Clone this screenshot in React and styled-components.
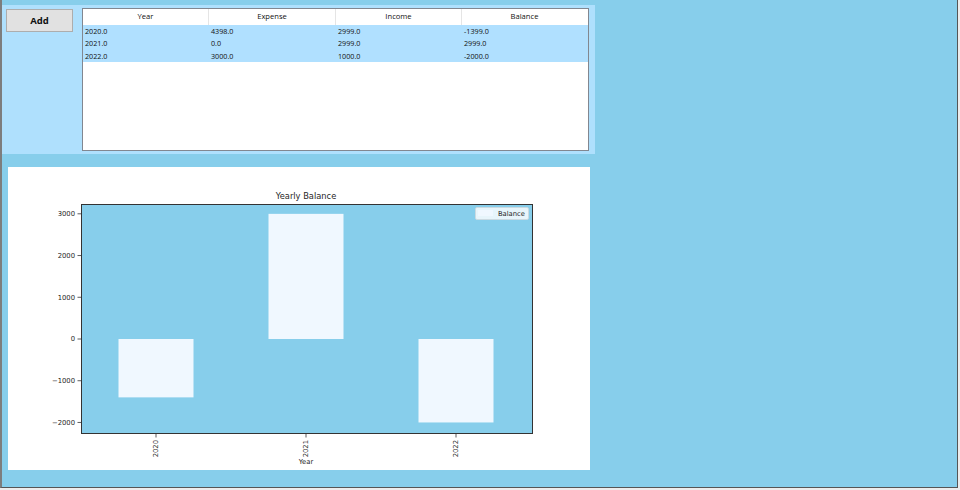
import React from "react";
import styled, { createGlobalStyle } from "styled-components";

const Global = createGlobalStyle`
  html, body { margin: 0; padding: 0; background: #ececec; }
  body { font-family: "Noto Sans", "DejaVu Sans", sans-serif; }
`;

const Window = styled.div`
  box-sizing: border-box;
  width: 958px;
  height: 488px;
  background: #87ceeb;
  border-left: 2px solid #7d7d7d;
  border-right: 1px solid #555;
  border-bottom: 1px solid #555;
  padding-top: 5px;
  display: flex;
  flex-direction: column;
  align-items: flex-start;
`;

const TopPanel = styled.div`
  box-sizing: border-box;
  width: 593px;
  height: 149px;
  background: #afe0fd;
  display: flex;
  align-items: flex-start;
  padding: 3px 0 0 4px;
`;

const Button = styled.button`
  box-sizing: border-box;
  width: 67px;
  height: 23px;
  margin-top: 1px;
  background: #e1e1e1;
  border: 1px solid #adadad;
  font-family: "Open Sans", "Noto Sans", sans-serif;
  font-weight: 700;
  font-size: 9.5px;
  color: #111;
  padding: 0;
  cursor: default;
`;

const Table = styled.div`
  box-sizing: border-box;
  width: 507px;
  height: 143px;
  margin-left: 9px;
  border: 1px solid #828790;
  background: #fff;
  font-family: "Open Sans", "Noto Sans", sans-serif;
  font-size: 7.2px;
  color: #111;
`;

const Grid = styled.div`
  display: grid;
  grid-template-columns: 126px 127px 126px 126px;
`;

const HeadCell = styled.div`
  box-sizing: border-box;
  height: 16px;
  line-height: 15px;
  font-size: 7.6px;
  text-align: center;
  border-right: 1px solid ${(p) => (p.$last ? "transparent" : "#e5e5e5")};
  background: #fff;
`;

const Cell = styled.div`
  box-sizing: border-box;
  height: 12.33px;
  line-height: 12px;
  padding-left: 2px;
  background: #b0e0ff;
  white-space: nowrap;
`;

const ChartPanel = styled.div`
  width: 582px;
  height: 303px;
  margin: 13px 0 0 6px;
  background: #fff;
`;

const rows = [
  ["2020.0", "4398.0", "2999.0", "-1399.0"],
  ["2021.0", "0.0", "2999.0", "2999.0"],
  ["2022.0", "3000.0", "1000.0", "-2000.0"],
];

const Y0 = 172;
const K = 0.04173;
const yOf = (v) => Y0 - v * K;

function Chart() {
  const ticks = [3000, 2000, 1000, 0, -1000, -2000];
  const bars = [
    { x: 148, v: -1399, label: "2020" },
    { x: 298, v: 2999, label: "2021" },
    { x: 448, v: -2000, label: "2022" },
  ];
  const txt = "#262626";
  const font = "'DejaVu Sans', sans-serif";
  return (
    <svg width="582" height="303" viewBox="0 0 582 303" style={{ display: "block" }}>
      <text x="298" y="32" textAnchor="middle" fontFamily={font} fontSize="8.3" fill={txt}>
        Yearly Balance
      </text>
      <rect x="73.5" y="37.5" width="451" height="229" fill="#87ceeb" stroke="#333" strokeWidth="1" />
      {bars.map((b) => {
        const top = Math.min(yOf(b.v), Y0);
        const h = Math.abs(yOf(b.v) - Y0);
        return <rect key={b.label} x={b.x - 37.5} y={top} width="75" height={h} fill="#f0f8ff" />;
      })}
      <rect x="73.5" y="37.5" width="451" height="229" fill="none" stroke="#333" strokeWidth="1" />
      {ticks.map((t) => (
        <g key={t}>
          <line x1="69.5" x2="73" y1={yOf(t)} y2={yOf(t)} stroke="#333" strokeWidth="0.8" />
          <text x="67" y={yOf(t) + 2.4} textAnchor="end" fontFamily={font} fontSize="6.8" fill={txt}>
            {t < 0 ? "\u2212" + Math.abs(t) : t}
          </text>
        </g>
      ))}
      {bars.map((b) => (
        <g key={"t" + b.label}>
          <line x1={b.x} x2={b.x} y1="267" y2="270.5" stroke="#333" strokeWidth="0.8" />
          <text
            transform={`translate(${b.x + 2.4} 273) rotate(-90)`}
            textAnchor="end"
            fontFamily={font}
            fontSize="6.8"
            fill={txt}
          >
            {b.label}
          </text>
        </g>
      ))}
      <text x="298" y="296.5" textAnchor="middle" fontFamily={font} fontSize="6.8" fill={txt}>
        Year
      </text>
      <rect x="467.5" y="40.5" width="53" height="12" rx="1.5" fill="#e7f5fb" stroke="#d0d8dc" strokeWidth="0.8" />
      <rect x="470" y="43" width="15" height="6" fill="#f0f8ff" />
      <text x="517" y="48.7" textAnchor="end" fontFamily={font} fontSize="6.8" fill={txt}>
        Balance
      </text>
    </svg>
  );
}

export default function App() {
  const heads = ["Year", "Expense", "Income", "Balance"];
  return (
    <>
      <Global />
      <Window>
        <TopPanel>
          <Button>Add</Button>
          <Table>
            <Grid>
              {heads.map((h, i) => (
                <HeadCell key={h} $last={i === 3}>
                  {h}
                </HeadCell>
              ))}
              {rows.flatMap((r, ri) => r.map((c, ci) => <Cell key={ri + "-" + ci}>{c}</Cell>))}
            </Grid>
          </Table>
        </TopPanel>
        <ChartPanel>
          <Chart />
        </ChartPanel>
      </Window>
    </>
  );
}
